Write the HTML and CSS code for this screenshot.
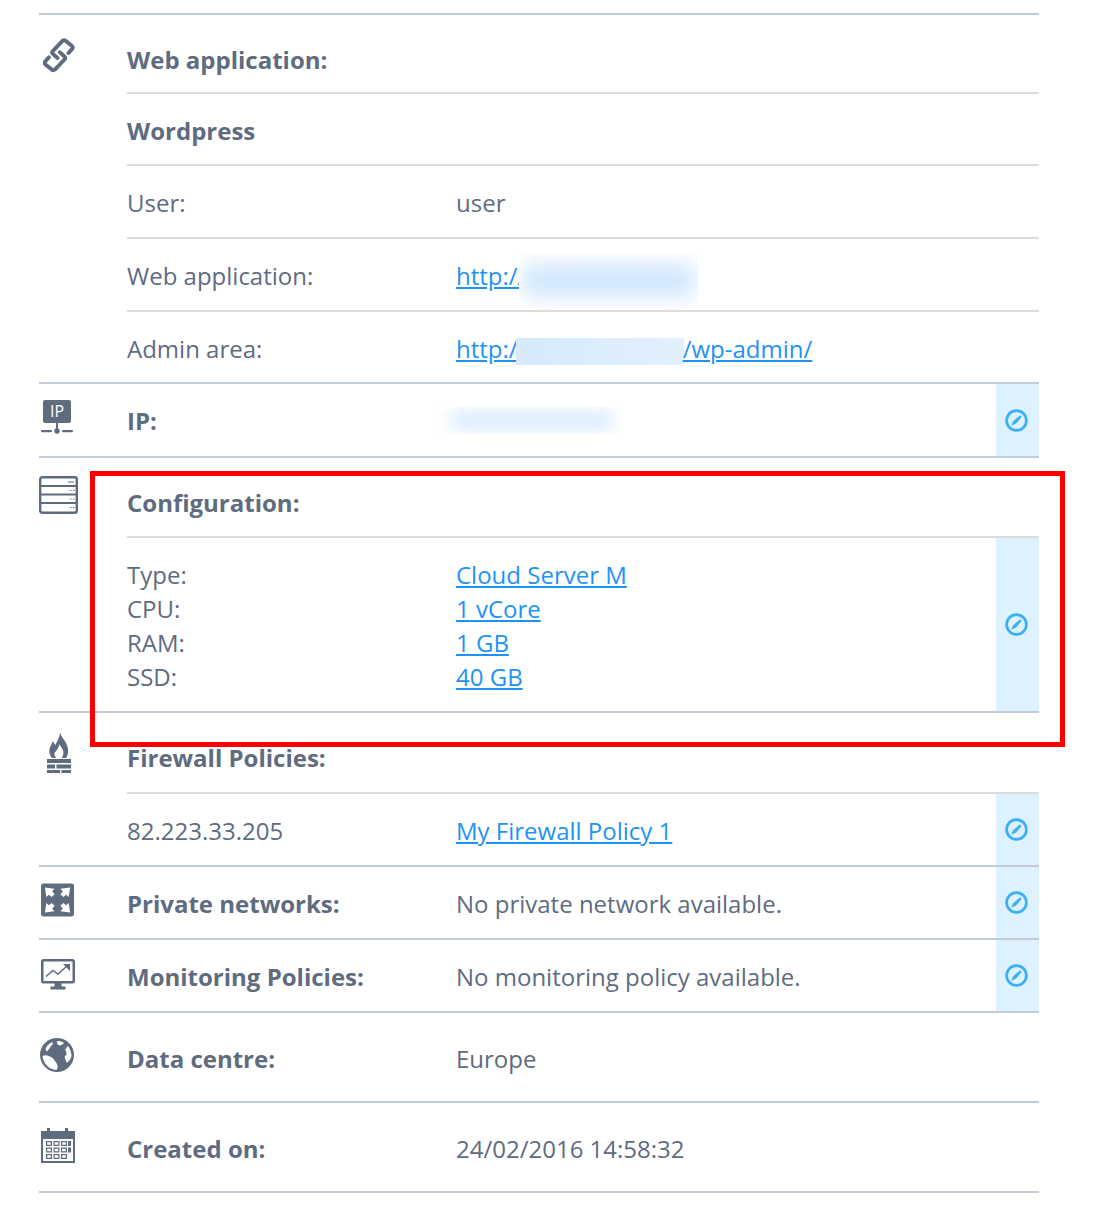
FILE: index.html
```html
<!DOCTYPE html>
<html lang="en">
<head>
<meta charset="utf-8">
<title>Server details</title>
<link rel="stylesheet" href="styles.css">
</head>
<body>
<main class="panel">
  <section class="group">
    <div class="ico"><svg class="i-link" viewBox="0 0 32 36"><path d="M14.500 20 L9.700 15.600 Q8.600 14.400 9.700 13.200 L19.500 2.800 Q21 1.600 22.600 2.800 L29 8 Q30.300 9.400 29.200 10.900 L25.500 15" /><path d="M16.900 14.400 L21.700 18.800 Q22.800 20 21.700 21.200 L11.900 31.600 Q10.400 32.800 8.800 31.600 L2.400 26.400 Q1.100 25 2.200 23.500 L5.900 19.400" /></svg></div>
    <div class="rows">
      <div class="row head-first"><b>Web application:</b></div>
      <div class="row h72"><b>Wordpress</b></div>
      <div class="row h73"><span>User:</span><span>user</span></div>
      <div class="row h73"><span>Web application:</span><span class="blurwrap"><a href="#">http://</a><span class="blur b1"><i></i></span></span></div>
      <div class="row h72"><span>Admin area:</span><span class="blurwrap"><a href="#">http:/<span class="blur b2"></span>/wp-admin/</a></span></div>
    </div>
  </section>
  <section class="group">
    <div class="ico"><svg class="i-ip" viewBox="0 0 32 36"><rect x="2" y="0" width="28" height="23" rx="2" class="fill"/><text x="16" y="16.500" class="iptext">IP</text><rect x="15" y="23" width="2" height="8" class="fill"/><circle cx="16" cy="31" r="2.700" class="fill"/><rect x="0" y="30" width="11" height="2.200" rx="1" class="fill"/><rect x="21" y="30" width="11" height="2.200" rx="1" class="fill"/></svg></div>
    <div class="rows">
      <div class="row h72"><b class="flat">IP:</b><span class="blur b3"><i></i></span><span class="pen"><svg viewBox="0 0 24 24"><circle cx="12" cy="12" r="9.500"/><path d="M7 17 L8.800 12.600 L15 7.400 Q16.700 6.900 16.600 8.800 L11.400 15.200 Z"/></svg></span></div>
    </div>
  </section>
  <section class="group">
    <div class="ico"><svg class="i-srv" viewBox="0 0 39 38"><rect x="1.200" y="1.200" width="36.600" height="35.600" rx="2"/><path class="seps" d="M1 10 H38 M1 18.500 H38 M1 27 H38"/><path class="dots" d="M29 6 H35 M31 14.500 H32.500 M34 14.500 H35.500 M31 23 H32.500 M34 23 H35.500 M31 31.500 H32.500 M34 31.500 H35.500"/></svg></div>
    <div class="rows">
      <div class="row head"><b>Configuration:</b></div>
      <div class="row h175">
        <div class="speclist"><span>Type:</span><span>CPU:</span><span>RAM:</span><span>SSD:</span></div>
        <div class="speclist"><a href="#">Cloud Server M</a><a href="#">1 vCore</a><a href="#">1 GB</a><a href="#">40 GB</a></div>
        <span class="pen"><svg viewBox="0 0 24 24"><circle cx="12" cy="12" r="9.500"/><path d="M7 17 L8.800 12.600 L15 7.400 Q16.700 6.900 16.600 8.800 L11.400 15.200 Z"/></svg></span>
      </div>
    </div>
  </section>
  <section class="group">
    <div class="ico"><svg class="i-fire" viewBox="0 0 26 41"><path class="fill" d="M14 0 C15 6 21 9 22 17 C22.500 20 21.500 24 20 26 H6 C4 24 3 21 3.500 17 C4 14 6 12 7 9 C8 11 8.500 12 9.500 13 C11 9 14 5 14 0 Z"/><path class="hole" d="M13.500 12 C14 15 18 17 17.500 21 C17.300 23 16.500 25 15.500 26 H10.500 C9 25 8.200 23 8.500 20.500 C10 20 12.500 16 13.500 12 Z"/><path class="fill" d="M1 27 H25 V31 H1 Z M1 32.500 H9 V36.500 H1 Z M10.500 32.500 H25 V36.500 H10.500 Z M1 38 H14 V41 H1 Z M15.500 38 H25 V41 H15.500 Z"/></svg></div>
    <div class="rows">
      <div class="row head-fw"><b>Firewall Policies:</b></div>
      <div class="row h73"><span>82.223.33.205</span><a href="#">My Firewall Policy 1</a><span class="pen"><svg viewBox="0 0 24 24"><circle cx="12" cy="12" r="9.500"/><path d="M7 17 L8.800 12.600 L15 7.400 Q16.700 6.900 16.600 8.800 L11.400 15.200 Z"/></svg></span></div>
    </div>
  </section>
  <section class="group">
    <div class="ico"><svg class="i-net" viewBox="0 0 34 34"><rect width="34" height="34" rx="2.500" class="fill"/><path class="hole" d="M4 4 L14 5.500 L11.500 8 L14 11 L11 14 L8 11.500 L5.500 14 Z M30 4 L20 5.500 L22.500 8 L20 11 L23 14 L26 11.500 L28.500 14 Z M4 30 L14 28.500 L11.500 26 L14 23 L11 20 L8 22.500 L5.500 20 Z M30 30 L20 28.500 L22.500 26 L20 23 L23 20 L26 22.500 L28.500 20 Z"/></svg></div>
    <div class="rows"><div class="row h71"><b>Private networks:</b><span>No private network available.</span><span class="pen"><svg viewBox="0 0 24 24"><circle cx="12" cy="12" r="9.500"/><path d="M7 17 L8.800 12.600 L15 7.400 Q16.700 6.900 16.600 8.800 L11.400 15.200 Z"/></svg></span></div></div>
  </section>
  <section class="group">
    <div class="ico"><svg class="i-mon" viewBox="0 0 34 31"><path class="fill" fill-rule="evenodd" d="M2.500 0 H31.500 Q34 0 34 2.500 V22 Q34 24.500 31.500 24.500 H2.500 Q0 24.500 0 22 V2.500 Q0 0 2.500 0 Z M2.500 2.500 V22 H31.500 V2.500 Z"/><path class="fill" d="M13.500 24 H20.500 V27.500 H24.500 V30.500 H9.500 V27.500 H13.500 Z"/><path class="line" d="M5 17.500 L12 11.500 L17 15 L26 7"/><path class="fill" d="M22 5 H29 V12 L26.500 9.500 L24.500 7.500 Z"/></svg></div>
    <div class="rows"><div class="row h71"><b>Monitoring Policies:</b><span>No monitoring policy available.</span><span class="pen"><svg viewBox="0 0 24 24"><circle cx="12" cy="12" r="9.500"/><path d="M7 17 L8.800 12.600 L15 7.400 Q16.700 6.900 16.600 8.800 L11.400 15.200 Z"/></svg></span></div></div>
  </section>
  <section class="group">
    <div class="ico"><svg class="i-globe" viewBox="0 0 34 34"><circle cx="17" cy="17" r="17" class="fill"/><path class="hole" d="M2.500 18 C6 16 9 18 12 19.500 C14 21 15 23 17 26 C18 28 18 30 16.500 32 C9 31.500 3.500 26 2.500 18 Z"/><path class="hole" d="M6 9.500 C8 6.500 10.500 4.500 13 4 C12.300 6 13 7 11 8 C10 10 9 11 7 13.500 C5.800 12.500 5.300 11 6 9.500 Z"/><path class="hole" d="M28 8 C30 11 31.500 14 31.500 18 C30.500 22 28.500 23 27 25 C26 22 24 20 25 18 C27 17 27 14 25 12 C26 10 27 9 28 8 Z"/><path class="hole" d="M17.500 3 C20 3 22 3.500 24 5 C22 7 20 8 18.500 7 C17 6 16.500 5 17.500 3 Z"/></svg></div>
    <div class="rows"><div class="row h88"><b>Data centre:</b><span>Europe</span></div></div>
  </section>
  <section class="group">
    <div class="ico"><svg class="i-cal" viewBox="0 0 34 35"><path class="fill" fill-rule="evenodd" d="M0 3 H6 V0 H9 V3 H24 V0 H27 V3 H34 V35 H0 Z M2 11 V33 H32 V11 Z"/><path class="fill" fill-rule="evenodd" d="M5 13 H11 V18 H5 Z M6.200 14.200 V16.800 H9.800 V14.200 Z M12.500 13 H18.500 V18 H12.500 Z M13.700 14.200 V16.800 H17.300 V14.200 Z M20 13 H26 V18 H20 Z M21.200 14.200 V16.800 H24.800 V14.200 Z M27 13 H30 V18 H27 Z M5 19.500 H11 V24.500 H5 Z M6.200 20.700 V23.300 H9.800 V20.700 Z M12.500 19.500 H18.500 V24.500 H12.500 Z M13.700 20.700 V23.300 H17.300 V20.700 Z M20 19.500 H26 V24.500 H20 Z M21.200 20.700 V23.300 H24.800 V20.700 Z M27 19.500 H30 V24.500 H27 Z M5 26 H11 V31 H5 Z M6.200 27.200 V29.800 H9.800 V27.200 Z M12.500 26 H18.500 V31 H12.500 Z M13.700 27.200 V29.800 H17.300 V27.200 Z M20 26 H26 V31 H20 Z M21.200 27.200 V29.800 H24.800 V27.200 Z"/></svg></div>
    <div class="rows"><div class="row h88"><b>Created on:</b><span>24/02/2016 14:58:32</span></div></div>
  </section>
  <div class="redbox"></div>
</main>
</body>
</html>
```
FILE: styles.css
```css
* { box-sizing: border-box; }
html, body { margin: 0; background: #fff; }
body { font-family: "Open Sans", sans-serif; font-size: 24px; color: #5f6b7f; height: 1224px; overflow: hidden; }
.panel { position: relative; width: 1000px; margin: 0 0 0 39px; padding-top: 13px; }
.group { display: flex; border-top: 2px solid #c3cbd7; }
.group:last-of-type { border-bottom: 2px solid #c3cbd7; }
.ico { flex: 0 0 88px; position: relative; }
.ico svg { position: absolute; display: block; }
.rows { flex: 1; min-width: 0; }
.row { display: grid; grid-template-columns: 329px 1fr 43px; align-items: center; border-top: 2px solid #dcdcdc; }
.row:first-child { border-top: 0; }
.row b { font-weight: 700; }
.row > * { white-space: nowrap; }
.row > :not(.pen) { padding-top: 2px; }
.row > .flat { padding-top: 0; }
a { color: #1f93f5; text-decoration: underline; }
.head-first { height: 77px; padding-top: 9px; }
.head { height: 78px; padding-top: 8px; }
.head-fw { height: 79px; padding-top: 8px; }
.h71 { height: 71px; }
.h72 { height: 72px; }
.h73 { height: 73px; }
.h88 { height: 88px; }
.h175 { height: 175px; }
.pen { align-self: stretch; background: #def1ff; display: flex; align-items: center; justify-content: center; grid-column: 3; padding-right: 2px; }
.pen svg { width: 25px; height: 25px; }
.pen circle { fill: none; stroke: #3cb0f7; stroke-width: 2.600; }
.pen path { fill: #3cb0f7; }
.speclist { display: flex; flex-direction: column; line-height: 34px; align-items: flex-start; }
.blurwrap { position: relative; }
.blur { display: inline-block; vertical-align: middle; }
.blur i { display: block; width: 100%; height: 100%; border-radius: 14px; }
.b1 { position: absolute; left: 63px; top: -3px; width: 180px; height: 53px; overflow: hidden; background: #fff; padding: 9px 2px; }
.b1 i { background: #d2e8fd; filter: blur(10px); }
.b2 { width: 168px; height: 27px; background: linear-gradient(90deg, #d6eafc, #e2f0fd); margin-left: -2px; margin-right: -1px; vertical-align: -7px; }
.b3 { width: 185px; height: 27px; margin-left: -17px; overflow: hidden; padding: 5px 10px; }
.row > .b3 { padding-top: 5px; }
.b3 i { background: #d6eafd; filter: blur(8px); }
.fill { fill: #5f6b7f; }
.hole { fill: #fff; }
.iptext { fill: #fff; font-size: 16px; text-anchor: middle; font-family: "Open Sans", sans-serif; }
.i-link { left: 4px; top: 23px; width: 32px; height: 36px; fill: none; stroke: #5f6b7f; stroke-width: 3.900; stroke-linecap: round; stroke-linejoin: round; }
.i-ip { left: 2px; top: 16px; width: 32px; height: 36px; }
.i-srv { left: 0; top: 18px; width: 39px; height: 38px; fill: #fff; stroke: #5f6b7f; stroke-width: 2.400; }
.i-srv .seps { stroke-width: 1.800; }
.i-srv .dots { stroke-width: 1; }
.i-fire { left: 7px; top: 19px; width: 26px; height: 41px; }
.i-net { left: 2px; top: 16px; width: 33px; height: 34px; }
.i-mon { left: 2px; top: 19px; width: 34px; height: 31px; }
.i-mon .line { fill: none; stroke: #5f6b7f; stroke-width: 1.500; }
.i-globe { left: 1px; top: 25px; width: 34px; height: 34px; }
.i-cal { left: 2px; top: 25px; width: 34px; height: 35px; }
.redbox { position: absolute; left: 51px; top: 471px; width: 975px; height: 276px; border: 5px solid #fe0000; pointer-events: none; }
```
